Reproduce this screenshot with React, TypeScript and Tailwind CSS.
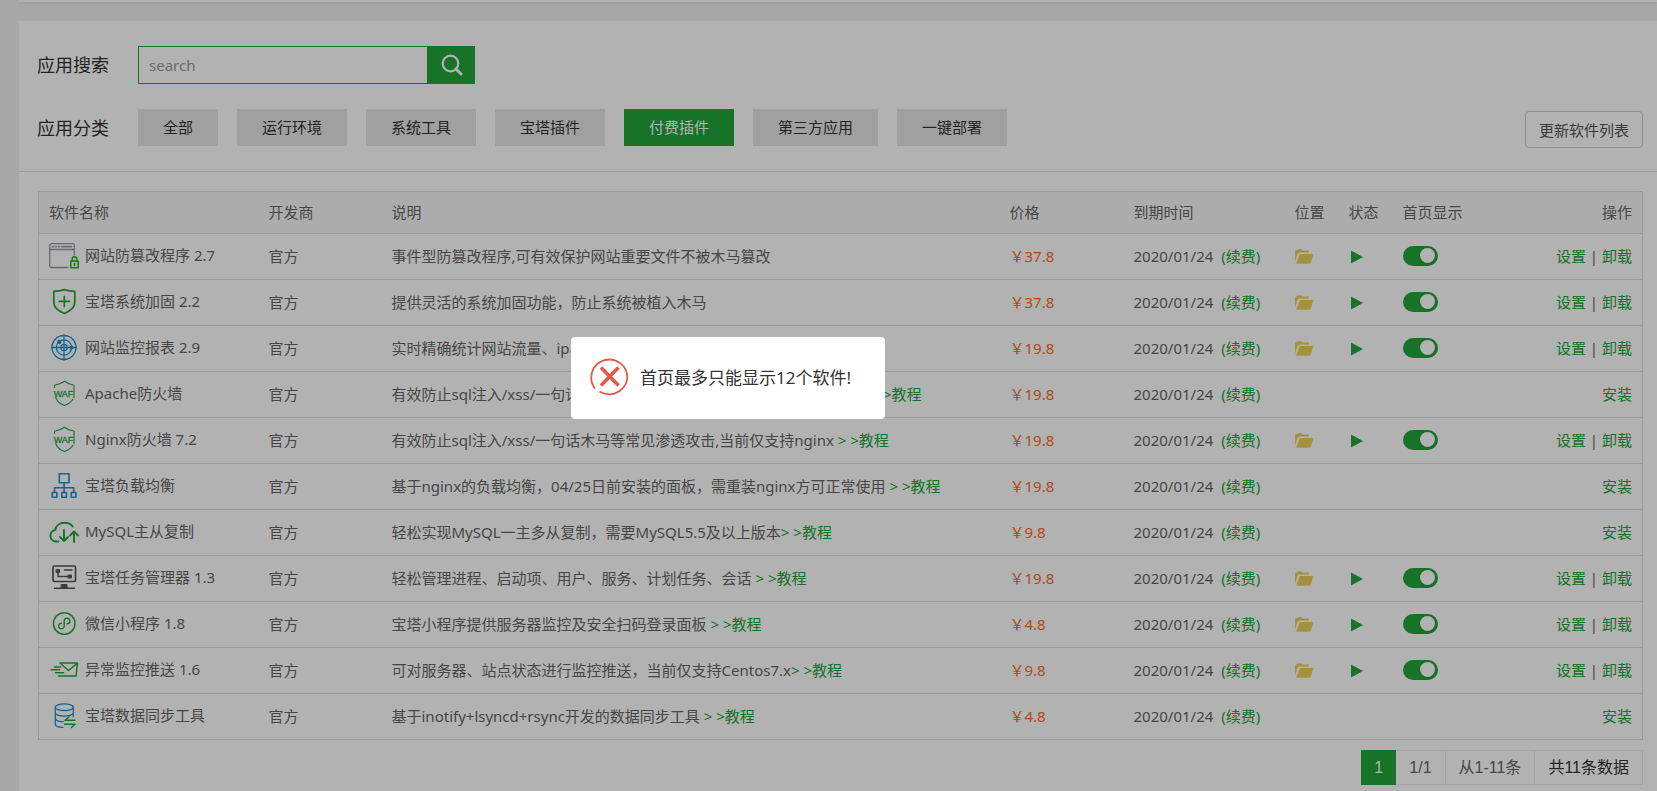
import React, { useState } from 'react';
import clsx from 'clsx';

type IconName =
  | 'tamper'
  | 'shield'
  | 'radar'
  | 'waf'
  | 'balance'
  | 'cloud'
  | 'task'
  | 'mini'
  | 'mail'
  | 'sync';

interface Plugin {
  icon: IconName;
  name: string;
  description: string;
  tutorial?: boolean;
  price: string;
  installed: boolean;
}

const categories = [
  '全部',
  '运行环境',
  '系统工具',
  '宝塔插件',
  '付费插件',
  '第三方应用',
  '一键部署',
];

const plugins: Plugin[] = [
  {
    icon: 'tamper',
    name: '网站防篡改程序 2.7',
    description: '事件型防篡改程序,可有效保护网站重要文件不被木马篡改',
    price: '37.8',
    installed: true,
  },
  {
    icon: 'shield',
    name: '宝塔系统加固 2.2',
    description: '提供灵活的系统加固功能，防止系统被植入木马',
    price: '37.8',
    installed: true,
  },
  {
    icon: 'radar',
    name: '网站监控报表 2.9',
    description: '实时精确统计网站流量、ip、uv',
    price: '19.8',
    installed: true,
  },
  {
    icon: 'waf',
    name: 'Apache防火墙',
    description:
      '有效防止sql注入/xss/一句话木马等常见渗透攻击,当前仅支持apache2.4 ',
    tutorial: true,
    price: '19.8',
    installed: false,
  },
  {
    icon: 'waf',
    name: 'Nginx防火墙 7.2',
    description:
      '有效防止sql注入/xss/一句话木马等常见渗透攻击,当前仅支持nginx ',
    tutorial: true,
    price: '19.8',
    installed: true,
  },
  {
    icon: 'balance',
    name: '宝塔负载均衡',
    description:
      '基于nginx的负载均衡，04/25日前安装的面板，需重装nginx方可正常使用 ',
    tutorial: true,
    price: '19.8',
    installed: false,
  },
  {
    icon: 'cloud',
    name: 'MySQL主从复制',
    description: '轻松实现MySQL一主多从复制，需要MySQL5.5及以上版本',
    tutorial: true,
    price: '9.8',
    installed: false,
  },
  {
    icon: 'task',
    name: '宝塔任务管理器 1.3',
    description: '轻松管理进程、启动项、用户、服务、计划任务、会话 ',
    tutorial: true,
    price: '19.8',
    installed: true,
  },
  {
    icon: 'mini',
    name: '微信小程序 1.8',
    description: '宝塔小程序提供服务器监控及安全扫码登录面板 ',
    tutorial: true,
    price: '4.8',
    installed: true,
  },
  {
    icon: 'mail',
    name: '异常监控推送 1.6',
    description: '可对服务器、站点状态进行监控推送，当前仅支持Centos7.x',
    tutorial: true,
    price: '9.8',
    installed: true,
  },
  {
    icon: 'sync',
    name: '宝塔数据同步工具',
    description: '基于inotify+lsyncd+rsync开发的数据同步工具 ',
    tutorial: true,
    price: '4.8',
    installed: false,
  },
];

const iconShapes: Record<IconName, React.ReactNode> = {
  tamper: (
    <>
      <g stroke="#9a98a6" strokeWidth="1.3">
        <path d="M19 26.5H2.5a1.8 1.8 0 0 1-1.8-1.8V4.5a1.8 1.8 0 0 1 1.8-1.8h21a1.8 1.8 0 0 1 1.8 1.8V14" />
        <path d="M.7 8.5h24.6" />
        <path d="M3.5 5.6h1M6.5 5.6h1M9.5 5.6h1M12.5 5.6h10" strokeWidth="1.6" />
      </g>
      <g stroke="#10b510" strokeWidth="1.5">
        <path d="M21.8 20h7.4v6.700h-7.400z" />
        <path d="M23.2 20v-2a2.300 2.300 0 0 1 4.600 0v2M25.500 22.300v2.200" />
      </g>
    </>
  ),
  shield: (
    <g stroke="#20a53a" strokeWidth="1.7">
      <path d="M15.3 2.6c3.4 1.2 7 1.7 10.5 1.8v11.2c0 5.5-5.2 8.8-10.5 10.9C10 24.4 4.8 21.1 4.8 15.6V4.4c3.5-.1 7.1-.6 10.5-1.8z" />
      <path d="M15.3 9.3v10.200M10.200 14.400h10.200" />
    </g>
  ),
  radar: (
    <g stroke="#2090cf" strokeWidth="1.3">
      <circle cx="15" cy="14.5" r="12" />
      <circle cx="15" cy="14.5" r="7.6" />
      <circle cx="15" cy="14.5" r="3.2" />
      <path d="M15 2v25M2.500 14.500h25" />
      <circle cx="10.3" cy="9" r="1.5" fill="#2090cf" />
      <circle cx="22.5" cy="14.5" r="1.3" fill="#2090cf" />
    </g>
  ),
  waf: (
    <>
      <path
        d="M5.5 8.5V6.2c4-.5 7.500-2 10-3.900 2.500 1.900 5.500 3.400 9.500 3.900v12.300M6.800 18.500c1 3.800 4.500 6.500 8.700 8 3.500-1.300 7-3.700 8.500-6.500"
        stroke="#20a53a"
        strokeWidth="1.1"
      />
      <text
        x="14.5"
        y="17.5"
        textAnchor="middle"
        fill="#20a53a"
        className="font-['Liberation_Sans',sans-serif] text-[9px]"
        stroke="#20a53a"
        strokeWidth="0.3"
      >
        WAF
      </text>
    </>
  ),
  balance: (
    <g stroke="#2090cf" strokeWidth="1.6">
      <path d="M10.300 2.800h9.700v9h-9.700zM3.200 21.500h4.600v4.700H3.200zM12.800 21.500h4.600v4.700h-4.600zM22.300 21.500h4.600v4.700h-4.600z" />
      <path d="M15.100 11.800v9.700M5.500 21.500v-4.700h19.200v4.700" />
    </g>
  ),
  cloud: (
    <g stroke="#20a53a" strokeWidth="1.9">
      <path d="M9.5 24.500H7a5.800 5.800 0 0 1-.8-11.500C7 8.500 10.800 5.800 15 5.800c4.200 0 7 1.200 8.600 3.600" />
      <path d="M15 13v11M11 20l4 4 4-4M25 25V14.500M21 18.500l4-4 4 4" />
    </g>
  ),
  task: (
    <g stroke="#555" strokeWidth="1.7">
      <rect x="4" y="3" width="22.5" height="15.5" rx="1.5" />
      <path d="M7.500 6.500h3v3h-3zM19.500 12h3v3h-3z" fill="#555" strokeWidth="1" />
      <path d="M9 9.500v4h10.500M15.500 7h7.500" strokeWidth="1.4" />
      <path d="M5.500 25.300h20" strokeWidth="1.5" />
      <path d="M12.500 21.500h5.500v3.500h-5.500z" fill="#555" strokeWidth="1" />
    </g>
  ),
  mini: (
    <g stroke="#1fae3a" strokeWidth="1.5">
      <circle cx="15.2" cy="14.5" r="10.8" />
      <path d="M12.500 14.200a2.800 2.800 0 1 0 2.700 2.800v-5a2.800 2.800 0 1 1 2.800 2.800" />
    </g>
  ),
  mail: (
    <g stroke="#20a53a" strokeWidth="1.5">
      <path d="M11 8h17.500l-1.500 13H9.500M11.500 8.500l8 7 8.500-7" />
      <path d="M5.500 12h6M2 14.800h8.500M6.500 17.800h8" />
    </g>
  ),
  sync: (
    <>
      <g stroke="#2090cf" strokeWidth="1.3">
        <ellipse cx="15.3" cy="6.2" rx="9" ry="3.3" />
        <path d="M6.300 6.200v17c0 1.800 3.500 3 7.700 3.200M24.300 6.200v9.500M6.300 11.800c0 1.800 4 3.300 9 3.300s9-1.500 9-3.300M6.300 17.500c0 1.800 3.700 3.200 8 3.200" />
      </g>
      <path
        d="M26 19.300H16l4-3.500M15.500 23.300H26l-3.500 3.200"
        stroke="#20a53a"
        strokeWidth="1.4"
      />
    </>
  ),
};

const PluginIcon: React.FC<{ name: IconName }> = ({ name }) => (
  <svg
    className="h-[30px] w-[30px] shrink-0"
    viewBox="0 0 30 30"
    fill="none"
    strokeLinecap="round"
    strokeLinejoin="round"
  >
    {iconShapes[name]}
  </svg>
);

const PluginRow: React.FC<{ plugin: Plugin }> = ({ plugin }) => {
  const [visible, setVisible] = useState(true);

  return (
    <tr className="h-[46px] border-b border-[#ddd]">
      <td className="px-2.5">
        <div className="flex items-center gap-1.5 whitespace-nowrap pb-0.5">
          <PluginIcon name={plugin.icon} />
          <span className="pb-0.5">{plugin.name}</span>
        </div>
      </td>
      <td className="px-2.5 pb-0.5">官方</td>
      <td className="whitespace-nowrap px-2.5 pb-0.5">
        {plugin.description}
        {plugin.tutorial && (
          <a href="#tutorial" className="text-[#20a53a]">
            &gt; &gt;教程
          </a>
        )}
      </td>
      <td className="px-2.5 pb-0.5 text-[#fc6d26]">￥{plugin.price}</td>
      <td className="whitespace-nowrap px-2.5 pb-0.5">
        2020/01/24
        <a href="#renew" className="ml-2 text-[#20a53a]">
          (续费)
        </a>
      </td>
      <td className="px-2.5">
        {plugin.installed && (
          <a href="#folder" aria-label="位置">
            <svg width="19" height="16" viewBox="0 0 19 16" fill="#edcf5c">
              <path d="M0 12.500V2.500A1 1 0 0 1 1 1.500h1l.7-1.200h4L7.500 1.500H13a1 1 0 0 1 1 1v1H4.200a1.500 1.500 0 0 0-1.400 1z" />
              <path d="M4.800 5h13.700l-3 9a1.200 1.200 0 0 1-1.100.8H1z" />
            </svg>
          </a>
        )}
      </td>
      <td className="px-3">
        {plugin.installed && (
          <a href="#status" aria-label="状态">
            <svg width="12" height="14" viewBox="0 0 12 14" fill="#20a53a">
              <path d="M0 0.500v13L12 7z" />
            </svg>
          </a>
        )}
      </td>
      <td className="px-2.5 pb-0.5">
        {plugin.installed && (
          <input
            type="checkbox"
            aria-label={`首页显示 ${plugin.name}`}
            checked={visible}
            onChange={(e) => setVisible(e.target.checked)}
            className="flex h-5 w-[35px] appearance-none items-center rounded-full bg-gray-300 px-[3px] before:block before:h-[15px] before:w-[15px] before:rounded-full before:bg-white before:shadow before:content-[''] checked:justify-end checked:bg-[#20a53a]"
          />
        )}
      </td>
      <td className="whitespace-nowrap px-2.5 pb-0.5 text-right">
        {plugin.installed ? (
          <>
            <a href="#settings" className="text-[#20a53a]">
              设置
            </a>
            {' | '}
            <a href="#uninstall" className="text-[#20a53a]">
              卸载
            </a>
          </>
        ) : (
          <a href="#install" className="text-[#20a53a]">
            安装
          </a>
        )}
      </td>
    </tr>
  );
};

const ErrorMessage: React.FC = () => (
  <div className="fixed inset-0 bg-black/30">
    <div
      role="alertdialog"
      aria-label="提示"
      className="absolute left-[571px] top-[337px] flex h-[82px] w-[314px] items-center gap-[11px] rounded-sm bg-white pl-[19px] text-[17px] text-[#333]"
    >
      <svg
        className="mb-1"
        width="39"
        height="39"
        viewBox="0 0 39 39"
        fill="none"
        stroke="#ea5444"
      >
        <path
          d="M5 31.500A18 18 0 1 1 37.300 21C36.500 29 30 36.500 20 37.300 16 37.500 12 36.300 9.500 34.600"
          strokeWidth="1.8"
        />
        <path d="M11 10.500l17.500 18M28.500 10.500L11 28.500" strokeWidth="3.4" />
      </svg>
      <span className="whitespace-nowrap">首页最多只能显示12个软件!</span>
    </div>
  </div>
);

const App: React.FC = () => {
  const [active, setActive] = useState('付费插件');

  return (
    <div className="flex min-h-screen flex-col bg-[#f1f1f1] pl-[19px] font-['Noto_Sans','Noto_Sans_CJK_SC',sans-serif] text-[15px] leading-5 text-[#666]">
      <div className="h-0.5 bg-white shadow" />
      <main className="mt-[19px] flex-1 bg-white">
        <div className="border-b border-[#ddd] pb-[25px] pl-[18px] pr-3.5 pt-[25px]">
          <form
            className="flex items-center"
            onSubmit={(e) => e.preventDefault()}
          >
            <label htmlFor="search" className="w-[101px] text-lg text-[#333]">
              应用搜索
            </label>
            <input
              id="search"
              type="text"
              placeholder="search"
              className="h-[38px] w-[290px] border border-[#20a53a] px-2.5 placeholder-[#999] outline-none"
            />
            <button
              type="submit"
              aria-label="搜索"
              className="flex h-[38px] w-[47px] items-center justify-center bg-[#20a53a]"
            >
              <svg
                width="22"
                height="22"
                viewBox="0 0 22 22"
                fill="none"
                stroke="#fff"
              >
                <circle cx="9.5" cy="9.5" r="7.8" strokeWidth="2.2" />
                <path d="M15 15l5 5" strokeWidth="3" strokeLinecap="round" />
              </svg>
            </button>
          </form>
          <div className="mt-[25px] flex items-center">
            <span className="w-[101px] text-lg text-[#333]">应用分类</span>
            <div className="flex gap-[19px]">
              {categories.map((category) => (
                <button
                  key={category}
                  type="button"
                  onClick={() => setActive(category)}
                  className={clsx(
                    'h-[37px] px-[25px] pb-0.5',
                    category === active
                      ? 'bg-[#20a53a] text-white'
                      : 'bg-[#e6e6e6] text-[#333]'
                  )}
                >
                  {category}
                </button>
              ))}
            </div>
            <button
              type="button"
              className="-mb-1 ml-auto h-[37px] rounded border border-[#ccc] px-[13px] text-[#555]"
            >
              更新软件列表
            </button>
          </div>
        </div>
        <div className="pl-[19px] pr-3.5 pt-[19px]">
          <table className="w-full table-fixed border-collapse border border-[#ddd] text-left">
            <thead>
              <tr className="h-[42px] border-b border-[#ddd] bg-[#f6f6f6]">
                <th className="w-[220px] px-2.5 pb-0.5 font-normal">软件名称</th>
                <th className="w-[123px] px-2.5 pb-0.5 font-normal">开发商</th>
                <th className="px-2.5 pb-0.5 font-normal">说明</th>
                <th className="w-[124px] px-2.5 pb-0.5 font-normal">价格</th>
                <th className="w-[161px] px-2.5 pb-0.5 font-normal">
                  到期时间
                </th>
                <th className="w-[54px] px-2.5 pb-0.5 font-normal">位置</th>
                <th className="w-[54px] px-2.5 pb-0.5 font-normal">状态</th>
                <th className="w-[90px] px-2.5 pb-0.5 font-normal">首页显示</th>
                <th className="w-[160px] px-2.5 pb-0.5 text-right font-normal">
                  操作
                </th>
              </tr>
            </thead>
            <tbody>
              {plugins.map((plugin) => (
                <PluginRow key={plugin.name} plugin={plugin} />
              ))}
            </tbody>
          </table>
          <div className="mt-2.5 flex justify-end font-['Liberation_Sans','Noto_Sans_CJK_SC',sans-serif] text-base">
            <span className="flex h-[35px] w-[35px] items-center justify-center bg-[#20a53a] text-white">
              1
            </span>
            <span className="flex h-[35px] items-center border border-l-0 border-[#ececec] px-[13px]">
              1/1
            </span>
            <span className="flex h-[35px] items-center border border-l-0 border-[#ececec] px-[13px]">
              从1-11条
            </span>
            <span className="flex h-[35px] items-center border border-l-0 border-[#ececec] px-[13px] text-[#333]">
              共11条数据
            </span>
          </div>
        </div>
      </main>
      <ErrorMessage />
    </div>
  );
};

export default App;
